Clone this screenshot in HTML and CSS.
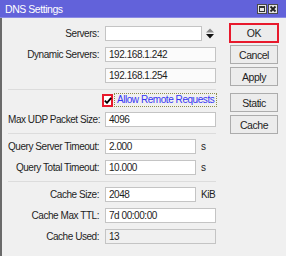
FILE: index.html
```html
<!DOCTYPE html>
<html>
<head>
<meta charset="utf-8">
<link rel="stylesheet" href="styles.css">
</head>
<body>
<div class="win">
  <div class="titlebar">
    <span class="title">DNS Settings</span>
    <div class="tbtns">
      <span class="tb max"><span class="maxin"></span></span>
      <span class="tb close"><svg width="8" height="8" viewBox="0 0 8 8"><path d="M1.5 1.5 L6.5 6.5 M6.5 1.5 L1.5 6.5" stroke="#222" stroke-width="1.8"/></svg></span>
    </div>
  </div>
  <div class="content">
    <div class="form">
      <div class="group">
        <div class="row">
          <span class="lbl">Servers:</span>
          <span class="field w97"></span>
          <svg class="updown" width="8" height="11" viewBox="0 0 8 11"><path d="M0 4.5 L4 0.5 L8 4.5 Z" fill="#8a8a8a"/><path d="M0 6 L8 6 L4 10.5 Z" fill="#111"/></svg>
        </div>
        <div class="row">
          <span class="lbl">Dynamic Servers:</span>
          <span class="field w111 ro">192.168.1.242</span>
        </div>
        <div class="row">
          <span class="lbl"></span>
          <span class="field w111 ro">192.168.1.254</span>
        </div>
      </div>
      <div class="sep s1"></div>
      <div class="group">
        <div class="row cbrow">
          <span class="lbl"></span>
          <span class="cbwrap"><span class="cb"><svg width="8" height="7" viewBox="0 0 8 7"><path d="M0.8 3.6 L3 5.8 L7.2 0.8" fill="none" stroke="#000" stroke-width="1.8"/></svg></span></span>
          <span class="cblabel">Allow Remote Requests</span>
        </div>
        <div class="row">
          <span class="lbl">Max UDP Packet Size:</span>
          <span class="field w111">4096</span>
        </div>
      </div>
      <div class="sep s2"></div>
      <div class="group">
        <div class="row">
          <span class="lbl">Query Server Timeout:</span>
          <span class="field w91">2.000</span>
          <span class="unit">s</span>
        </div>
        <div class="row">
          <span class="lbl">Query Total Timeout:</span>
          <span class="field w91">10.000</span>
          <span class="unit">s</span>
        </div>
      </div>
      <div class="sep s3"></div>
      <div class="group">
        <div class="row">
          <span class="lbl">Cache Size:</span>
          <span class="field w91">2048</span>
          <span class="unit">KiB</span>
        </div>
        <div class="row">
          <span class="lbl">Cache Max TTL:</span>
          <span class="field w111">7d 00:00:00</span>
        </div>
        <div class="row">
          <span class="lbl">Cache Used:</span>
          <span class="field w111 dis">13</span>
        </div>
      </div>
    </div>
    <div class="buttons">
      <div class="btn ok">OK</div>
      <div class="btn">Cancel</div>
      <div class="btn">Apply</div>
      <div class="btn gap">Static</div>
      <div class="btn">Cache</div>
    </div>
  </div>
</div>
</body>
</html>
```

FILE: styles.css
```css
* { box-sizing: border-box; }
html, body { margin: 0; padding: 0; }
body {
  width: 286px;
  height: 256px;
  overflow: hidden;
  background: #f0f0f0;
  font-family: "Liberation Sans", Arial, sans-serif;
  font-size: 10px;
  letter-spacing: -0.45px;
  color: #1e1e1e;
}
.win { width: 286px; height: 256px; background: #f0f0f0; }
.titlebar {
  height: 18px;
  background: #6262da;
  color: #fff;
  display: flex;
  align-items: center;
  padding-left: 5px;
  font-size: 10.5px;
  border-bottom: 1px solid #8a8ae4;
}
.tbtns { margin-left: auto; margin-right: 8px; display: flex; gap: 1px; }
.tb {
  width: 10px;
  height: 10px;
  background: #e4e4e4;
  border: 1px solid #4a4a4a;
  display: flex;
  align-items: center;
  justify-content: center;
}
.maxin { width: 6px; height: 6px; border: 1px solid #333; border-top-width: 2px; }
.content {
  display: flex;
  height: 238px;
  border-left: 2px solid #6a6a6a;
}
.form { width: 214px; padding: 8px 0 0 6px; }
.row { display: flex; align-items: center; height: 15px; margin-bottom: 6px; white-space: nowrap; }
.lbl { width: 91px; flex: none; text-align: right; margin-right: 6px; }
.field {
  height: 15px;
  flex: none;
  border: 1px solid #c4c4c4;
  background: #fff;
  padding-left: 3px;
  line-height: 13px;
}
.field.ro { background: #fbfbfb; }
.field.dis { background: #f0f0f0; }
.w111 { width: 111px; }
.w97 { width: 97px; }
.w91 { width: 91px; }
.unit { margin-left: 5px; }
.updown { margin-left: 4px; }
.sep { height: 1px; width: 208px; background: #dcdcdc; }
.s1 { margin-bottom: 3px; }
.s2 { margin-top: 1px; margin-bottom: 5px; }
.s3 { margin-top: 2px; margin-bottom: 5px; }
.cbrow { height: 14px; margin-bottom: 5px; }
.cbwrap {
  width: 11px;
  height: 13px;
  margin-left: -3px;
  border: 2px solid #e8192c;
  background: #fff;
  display: flex;
  align-items: center;
  justify-content: center;
}
.cb { display: flex; }
.cblabel {
  margin-left: 1px;
  height: 14px;
  line-height: 12px;
  padding: 0 2px;
  color: #3434f4;
  border: 1px dotted #8d8d4a;
}
.buttons { width: 50px; margin-left: 13px; padding-top: 5px; display: flex; flex-direction: column; }
.btn {
  width: 48px;
  height: 19px;
  margin-left: 1px;
  margin-bottom: 3px;
  border: 1px solid #acacac;
  background: #ececec;
  display: flex;
  align-items: center;
  justify-content: center;
  font-size: 10.5px;
}
.btn.ok {
  width: 50px;
  height: 20px;
  margin-left: 0;
  margin-bottom: 2px;
  border: 2px solid #e8192c;
}
.btn.gap { margin-top: 4px; }
```
